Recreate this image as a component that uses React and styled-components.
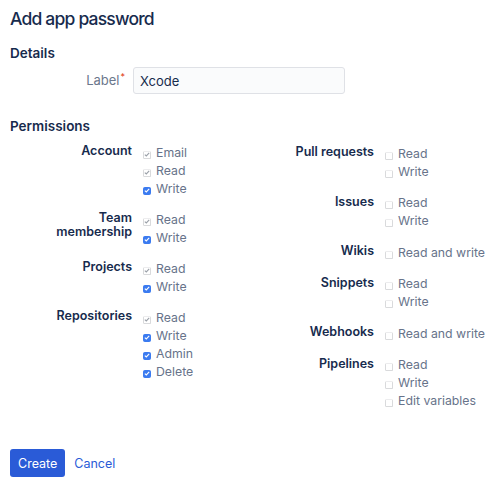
import React from 'react'
import styled, { createGlobalStyle } from 'styled-components'

const GlobalStyle = createGlobalStyle`
  html, body {
    margin: 0;
    padding: 0;
    background: #fff;
  }
  body {
    font-family: Inter, 'Noto Sans', 'Liberation Sans', sans-serif;
    color: #172b4d;
  }
`

const left = [
  { label: 'Account', options: [['Email', 'locked'], ['Read', 'locked'], ['Write', 'on']] },
  { label: 'Team membership', options: [['Read', 'locked'], ['Write', 'on']] },
  { label: 'Projects', options: [['Read', 'locked'], ['Write', 'on']] },
  {
    label: 'Repositories',
    options: [['Read', 'locked'], ['Write', 'on'], ['Admin', 'on'], ['Delete', 'on']],
  },
]

const right = [
  { label: 'Pull requests', options: [['Read'], ['Write']] },
  { label: 'Issues', options: [['Read'], ['Write']] },
  { label: 'Wikis', options: [['Read and write']] },
  { label: 'Snippets', options: [['Read'], ['Write']] },
  { label: 'Webhooks', options: [['Read and write']] },
  { label: 'Pipelines', options: [['Read'], ['Write'], ['Edit variables']] },
]

const Check = ({ state }) => (
  <Box $state={state}>
    {state && (
      <svg width="6" height="5" viewBox="0 0 6 5">
        <path
          d="M0.8 2.6 L2.3 4 L5.2 0.9"
          fill="none"
          stroke={state === 'on' ? '#fff' : '#9aa0a8'}
          strokeWidth="1.1"
        />
      </svg>
    )}
  </Box>
)

const PermGroup = ({ label, options }) => (
  <Group>
    <GroupLabel>{label}</GroupLabel>
    <Options>
      {options.map(([text, state]) => (
        <Option key={text}>
          <Check state={state} />
          <span>{text}</span>
        </Option>
      ))}
    </Options>
  </Group>
)

export default function App() {
  return (
    <Page>
      <GlobalStyle />
      <Title>Add app password</Title>
      <Section>Details</Section>
      <FieldRow>
        <FieldLabel>
          Label<Req>*</Req>
        </FieldLabel>
        <Input defaultValue="Xcode" />
      </FieldRow>
      <Section $perm>Permissions</Section>
      <Columns>
        <Column>
          {left.map((g) => (
            <PermGroup key={g.label} {...g} />
          ))}
        </Column>
        <Column $gap={13.6} $shift={1}>
          {right.map((g) => (
            <PermGroup key={g.label} {...g} />
          ))}
        </Column>
      </Columns>
      <Actions>
        <Primary>Create</Primary>
        <LinkButton>Cancel</LinkButton>
      </Actions>
    </Page>
  )
}

const Page = styled.div`
  width: 500px;
  height: 485px;
  box-sizing: border-box;
  padding: 8px 10px 0;
  display: flex;
  flex-direction: column;
`

const Title = styled.h1`
  margin: 0;
  font-size: 17.5px;
  font-weight: 500;
  letter-spacing: -0.8px;
  line-height: 22px;
  color: #172b4d;
`

const Section = styled.h2`
  margin: ${(p) => (p.$perm ? '22px 0 0' : '13px 0 0')};
  font-size: 13.5px;
  font-weight: 600;
  line-height: 20px;
  color: #172b4d;
`

const FieldRow = styled.div`
  display: flex;
  align-items: center;
  margin-top: 4px;
`

const FieldLabel = styled.label`
  width: 115px;
  text-align: right;
  font-size: 13px;
  color: #6b778c;
  margin-right: 8px;
  position: relative;
  top: -1px;
`

const Req = styled.sup`
  color: #de350b;
  font-size: 9px;
  margin-left: 1px;
`

const Input = styled.input`
  width: 212px;
  height: 27px;
  box-sizing: border-box;
  border: 1px solid #dfe1e6;
  border-radius: 3px;
  background: #fafbfc;
  padding: 0 6px;
  font-family: inherit;
  font-size: 13px;
  color: #172b4d;
  outline: none;
`

const Columns = styled.div`
  display: grid;
  grid-template-columns: 242px 242px;
  margin-top: 7px;
`

const Column = styled.div`
  display: flex;
  flex-direction: column;
  gap: ${(p) => p.$gap || 13}px;
  padding-top: ${(p) => p.$shift || 0}px;
`

const Group = styled.div`
  display: grid;
  grid-template-columns: 100px 1fr;
  column-gap: 11px;
  padding-left: 22px;
`

const GroupLabel = styled.div`
  text-align: right;
  font-size: 12.5px;
  font-weight: 600;
  line-height: 14px;
  color: #172b4d;
  padding-top: 1px;
`

const Options = styled.div`
  display: flex;
  flex-direction: column;
`

const Option = styled.div`
  display: flex;
  align-items: center;
  gap: 5px;
  height: 18px;
  font-size: 12.3px;
  color: #67738a;
`

const Box = styled.span`
  width: 8px;
  height: 8px;
  box-sizing: border-box;
  border-radius: 1.5px;
  margin-top: 5px;
  display: inline-flex;
  align-items: center;
  justify-content: center;
  flex: none;
  background: ${(p) => (p.$state === 'on' ? '#3b7bf0' : '#fff')};
  border: 1px solid ${(p) => (p.$state === 'on' ? '#3b7bf0' : '#d9dadc')};
  border-top-color: ${(p) => (p.$state === 'on' ? '#3b7bf0' : '#ececee')};
`

const Actions = styled.div`
  margin-top: auto;
  margin-bottom: 8px;
  display: flex;
  align-items: center;
  gap: 7px;
`

const Primary = styled.button`
  height: 28px;
  padding: 0 8px;
  border: none;
  border-radius: 3px;
  background: #2a5bd7;
  color: #fff;
  font-family: inherit;
  font-size: 12.5px;
`

const LinkButton = styled.button`
  border: none;
  background: none;
  padding: 0 2px;
  color: #2a5bd7;
  font-family: inherit;
  font-size: 12.5px;
`
